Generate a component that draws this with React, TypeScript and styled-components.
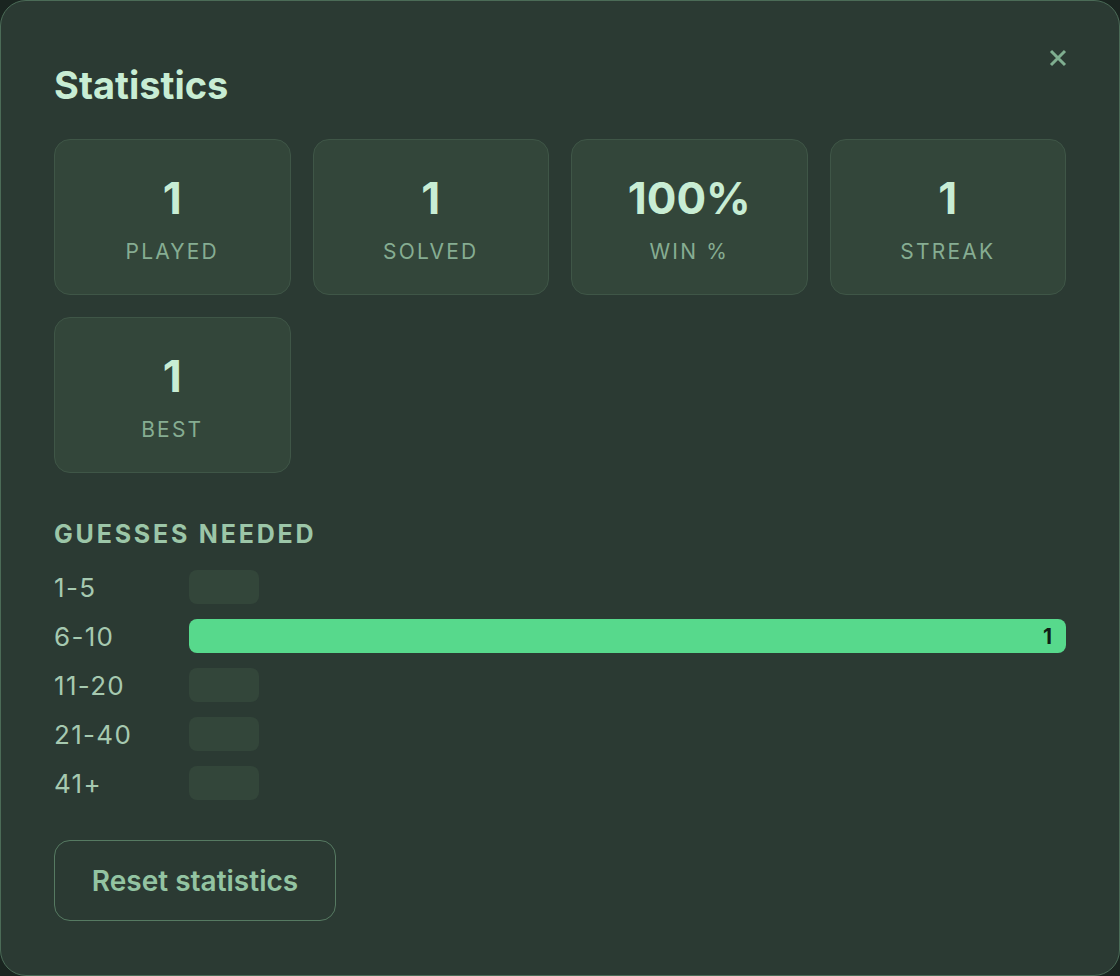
import React from "react"
import styled, { createGlobalStyle } from "styled-components"

const Global = createGlobalStyle`
  html, body {
    margin: 0;
    padding: 0;
    background: #1a2520;
  }

  body {
    font-family: Inter, "Noto Sans", "Liberation Sans", sans-serif;
  }
`

const Panel = styled.div`
  position: relative;
  box-sizing: border-box;
  width: 1120px;
  height: 976px;
  padding: 62px 53px 0;
  background: #2b3a33;
  border: 1px solid #4b6b57;
  border-radius: 26px;
`

const Close = styled.button`
  position: absolute;
  top: 44px;
  right: 48px;
  width: 26px;
  height: 26px;
  padding: 0;
  border: 0;
  background: none;
  color: #7fae90;
  display: flex;
  align-items: center;
  justify-content: center;
`

const Title = styled.h2`
  margin: 0 0 32px;
  font-size: 38px;
  line-height: 44px;
  font-weight: 700;
  color: #c8edd4;
`

const Cards = styled.div`
  display: grid;
  grid-template-columns: repeat(4, 1fr);
  gap: 22px;
`

const Card = styled.div`
  box-sizing: border-box;
  height: 156px;
  padding-top: 4px;
  display: flex;
  flex-direction: column;
  align-items: center;
  justify-content: center;
  gap: 18px;
  background: #33463a;
  border: 1.5px solid #3f5647;
  border-radius: 16px;
`

const Value = styled.div`
  font-size: 44px;
  line-height: 48px;
  font-weight: 700;
  color: #c8edd4;
`

const Label = styled.div`
  font-size: 21px;
  line-height: 24px;
  letter-spacing: 2.2px;
  color: #86ad92;
  text-transform: uppercase;
`

const Heading = styled.h3`
  margin: 47px 0 22px;
  font-size: 25px;
  line-height: 28px;
  font-weight: 700;
  letter-spacing: 2.8px;
  color: #9cc6a8;
  text-transform: uppercase;
`

const Rows = styled.div`
  display: flex;
  flex-direction: column;
  gap: 15px;
`

const Row = styled.div`
  display: grid;
  grid-template-columns: 135px 1fr;
  align-items: center;
  height: 34px;
`

const RowLabel = styled.span`
  font-size: 26px;
  letter-spacing: 1.3px;
  color: #a6c9b0;
`

const Bar = styled.div<{ $filled: boolean }>`
  box-sizing: border-box;
  height: 34px;
  min-width: 70px;
  border-radius: 8px;
  padding: 0 14px;
  display: flex;
  align-items: center;
  justify-content: flex-end;
  background: ${(p) => (p.$filled ? "#57d98c" : "#33463a")};
  color: #0f1f16;
  font-size: 21px;
  font-weight: 700;
`

const ResetButton = styled.button`
  margin-top: 40px;
  width: 282px;
  height: 81px;
  border: 1.5px solid #567a62;
  border-radius: 16px;
  background: transparent;
  color: #93c4a2;
  font-family: inherit;
  font-size: 28px;
  font-weight: 600;
`

const stats = [
  { value: "1", label: "Played" },
  { value: "1", label: "Solved" },
  { value: "100%", label: "Win %" },
  { value: "1", label: "Streak" },
  { value: "1", label: "Best" },
]

const guesses = [
  { range: "1-5", count: 0 },
  { range: "6-10", count: 1 },
  { range: "11-20", count: 0 },
  { range: "21-40", count: 0 },
  { range: "41+", count: 0 },
]

const max = Math.max(...guesses.map((g) => g.count), 1)

const App = () => (
  <>
    <Global />
    <Panel>
      <Close aria-label="Close">
        <svg width="20" height="20" viewBox="0 0 20 20">
          <path
            d="M3 3 L17 17 M17 3 L3 17"
            stroke="currentColor"
            strokeWidth="3"
            strokeLinecap="butt"
          />
        </svg>
      </Close>
      <Title>Statistics</Title>
      <Cards>
        {stats.map((s) => (
          <Card key={s.label}>
            <Value>{s.value}</Value>
            <Label>{s.label}</Label>
          </Card>
        ))}
      </Cards>
      <Heading>Guesses needed</Heading>
      <Rows>
        {guesses.map((g) => (
          <Row key={g.range}>
            <RowLabel>{g.range}</RowLabel>
            <div>
              <Bar
                $filled={g.count > 0}
                style={{ width: g.count > 0 ? `${(g.count / max) * 100}%` : 70 }}
              >
                {g.count > 0 ? g.count : ""}
              </Bar>
            </div>
          </Row>
        ))}
      </Rows>
      <ResetButton>Reset statistics</ResetButton>
    </Panel>
  </>
)

export default App
